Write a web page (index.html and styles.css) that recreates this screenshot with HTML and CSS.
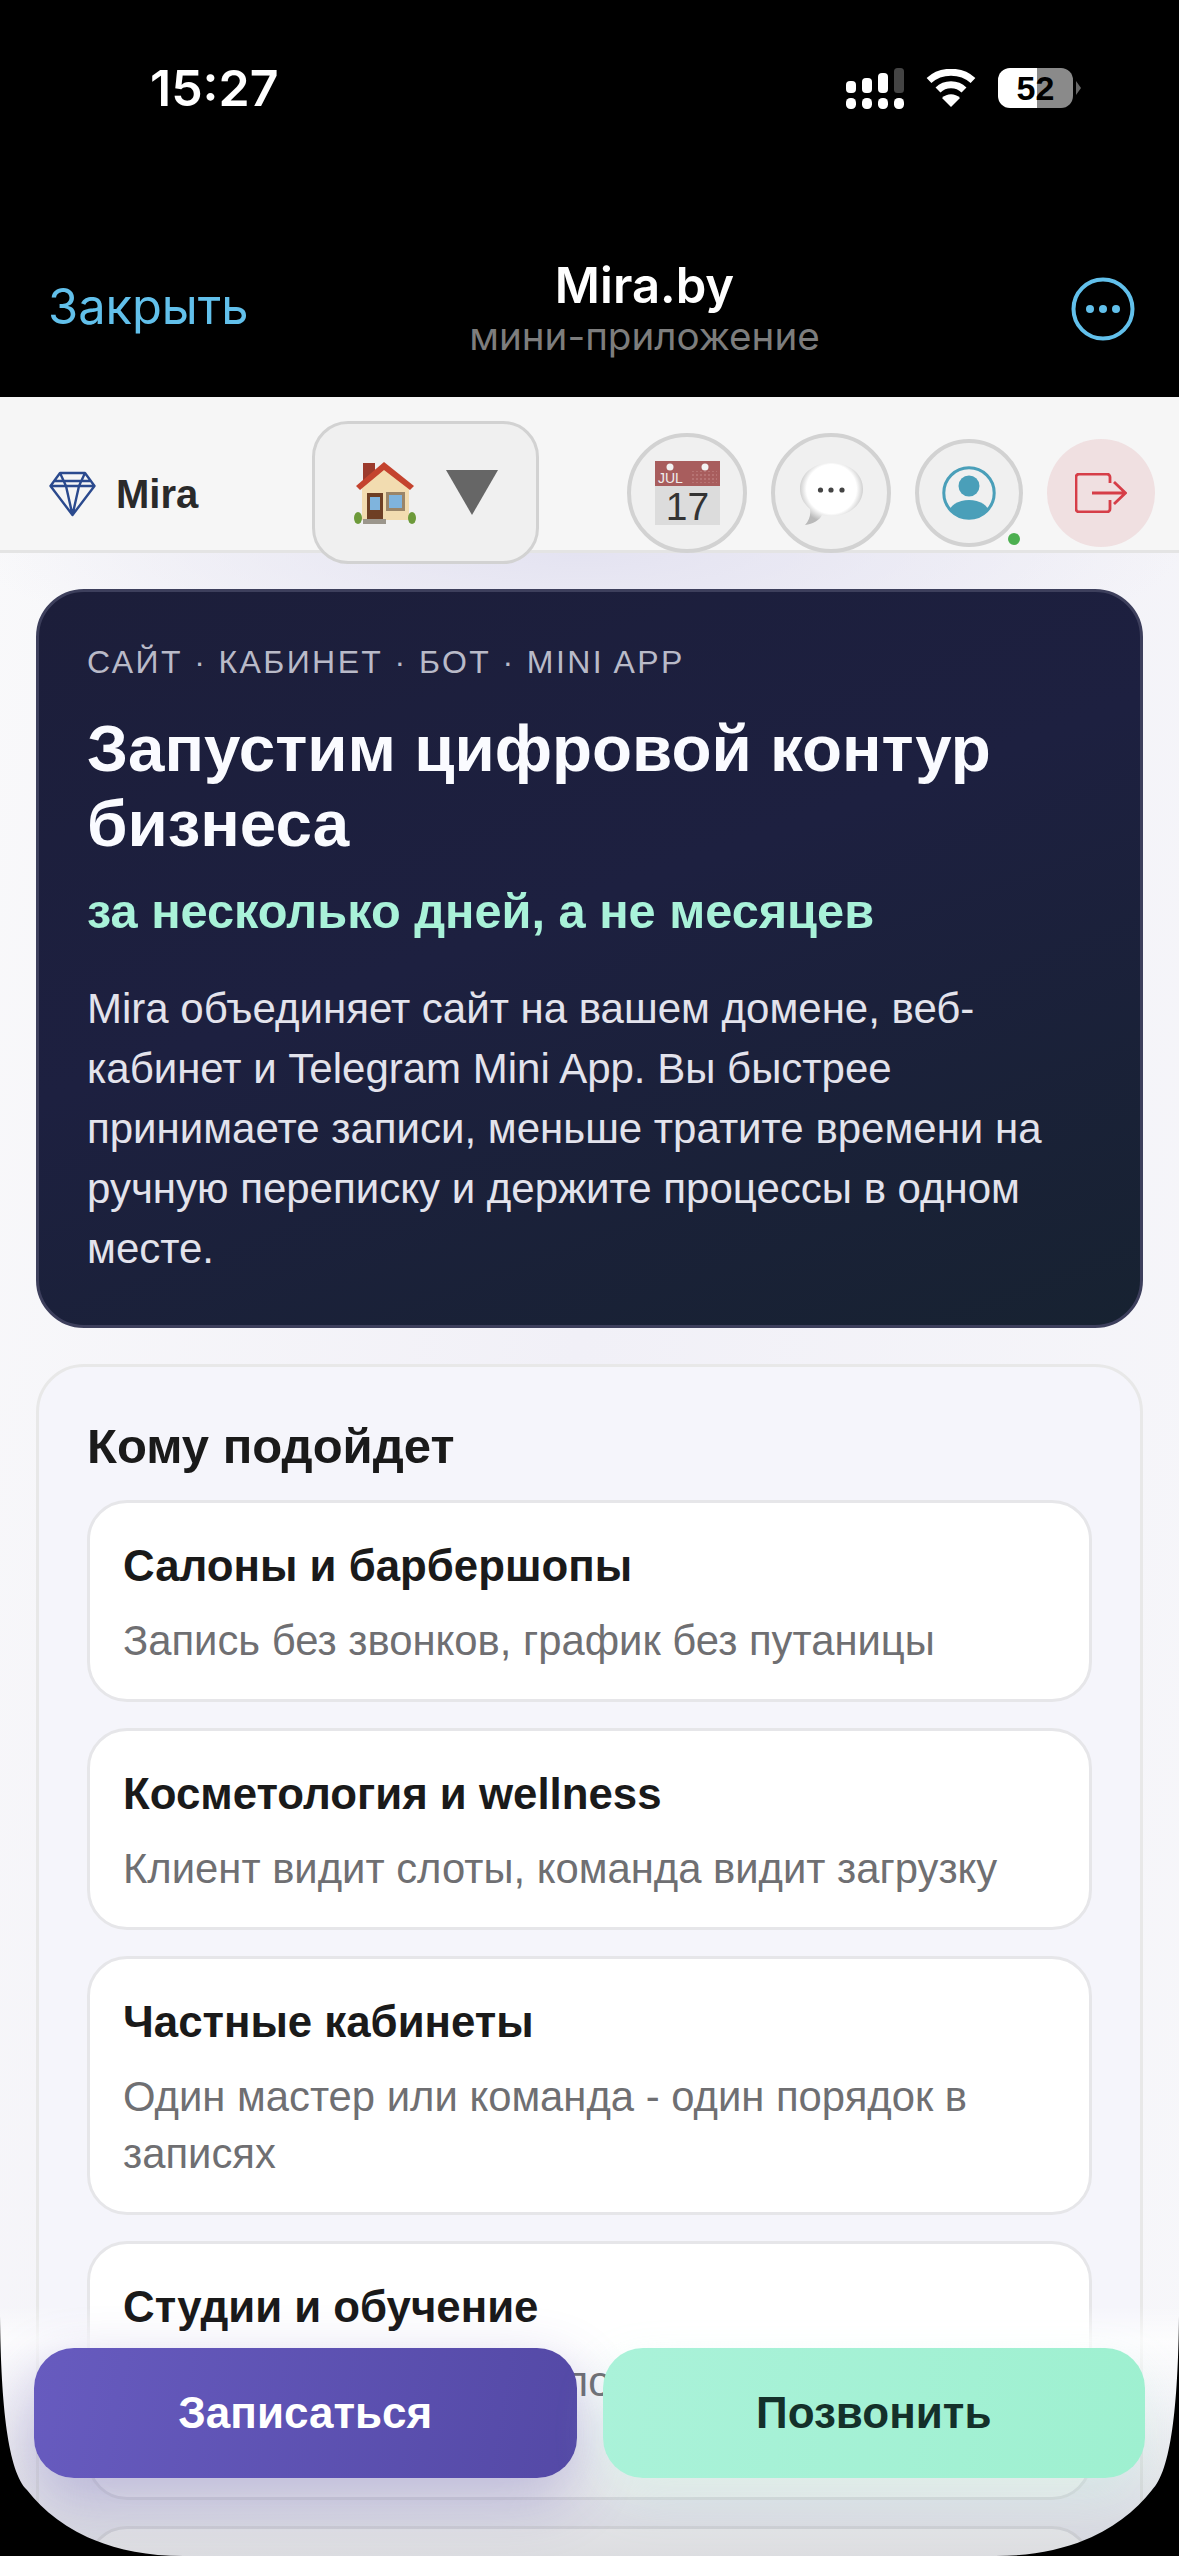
FILE: index.html
```html
<!DOCTYPE html>
<html lang="ru">
<head>
<meta charset="utf-8">
<title>Mira.by</title>
<link rel="stylesheet" href="styles.css">
</head>
<body>
<div class="screen">
  <header class="tg">
    <div class="status">
      <span class="clock">15:27</span>
      <div class="status-icons">
        <svg class="signal" width="58" height="41" viewBox="0 0 58 41">
          <g fill="#fff">
            <rect x="0" y="13" width="10" height="12" rx="4"/>
            <rect x="16" y="10" width="10" height="15" rx="4"/>
            <rect x="32" y="5" width="10" height="20" rx="4"/>
            <rect x="0" y="30" width="10" height="11" rx="4.5"/>
            <rect x="16" y="30" width="10" height="11" rx="4.5"/>
            <rect x="32" y="30" width="10" height="11" rx="4.5"/>
            <rect x="48" y="30" width="10" height="11" rx="4.5"/>
          </g>
          <rect x="48" y="0" width="10" height="25" rx="3.5" fill="#444"/>
        </svg>
        <svg class="wifi" width="50" height="38" viewBox="0 0 50 38">
          <path d="M3 11.5C15 0.5 35 0.5 47 11.5" fill="none" stroke="#fff" stroke-width="7"/>
          <path d="M12 21C19 14 31 14 38 21" fill="none" stroke="#fff" stroke-width="7"/>
          <path d="M25 38L16 29C21 24 29 24 34 29Z" fill="#fff"/>
        </svg>
        <div class="battery"><div class="battery-body"><span>52</span></div><i class="battery-tip"></i></div>
      </div>
    </div>
    <div class="tg-nav">
      <span class="close">Закрыть</span>
      <div class="tg-title"><strong>Mira.by</strong><span>мини-приложение</span></div>
      <svg class="more" width="64" height="64" viewBox="0 0 64 64">
        <circle cx="32" cy="32" r="29.5" fill="none" stroke="#62c0eb" stroke-width="4"/>
        <circle cx="19" cy="32" r="4" fill="#62c0eb"/><circle cx="32" cy="32" r="4" fill="#62c0eb"/><circle cx="45" cy="32" r="4" fill="#62c0eb"/>
      </svg>
    </div>
  </header>

  <nav class="topbar">
    <div class="brand">
      <svg width="47" height="46" viewBox="0 0 47 46">
        <path d="M11 2H36L45.5 15L23.5 44L1.5 15Z M1.5 15H45.5 M6 10H41 M11 2L17 15L23.5 44L30 15L36 2" fill="none" stroke="#2b4a8e" stroke-width="2.4" stroke-linejoin="round"/>
      </svg>
      <span>Mira</span>
    </div>
    <div class="picker">
      <svg class="house" width="62" height="62" viewBox="0 0 62 62">
        <rect x="9" y="1" width="12" height="22" fill="#9c3a2c"/>
        <path d="M8 25L30 6L55 25V58H8Z" fill="#f2dcb0"/>
        <path d="M2 24L30 0L60 24L56 28L30 8L6 28Z" fill="#c4432e"/>
        <rect x="13" y="31" width="16" height="27" fill="#6e3f24"/>
        <rect x="16" y="35" width="10" height="13" fill="#7fb4dd"/>
        <rect x="32" y="30" width="19" height="19" fill="#9a8568"/>
        <rect x="35" y="33" width="13" height="13" fill="#7fb4dd"/>
        <rect x="9" y="57" width="23" height="5" fill="#9b968c"/>
        <ellipse cx="4" cy="56" rx="4" ry="6" fill="#6d9a3a"/><ellipse cx="58" cy="56" rx="4" ry="6" fill="#6d9a3a"/>
      </svg>
      <svg class="caret" width="52" height="45" viewBox="0 0 52 45"><path d="M0 0H52L26 45Z" fill="#666"/></svg>
    </div>
    <div class="actions">
      <div class="round">
        <svg class="cal" width="65" height="64" viewBox="0 0 65 64">
          <defs><pattern id="dots" width="4" height="4" patternUnits="userSpaceOnUse"><circle cx="2" cy="2" r="0.8" fill="#c98f8f"/></pattern></defs>
          <rect x="0" y="0" width="65" height="25" fill="#a85d5d"/>
          <rect x="35" y="10" width="27" height="12" fill="url(#dots)"/>
          <rect x="0" y="25" width="65" height="39" fill="#dcdcdc"/>
          <circle cx="15" cy="6" r="3.5" fill="#f3f3f3"/><circle cx="50" cy="6" r="3.5" fill="#f3f3f3"/>
          <text x="3" y="22" class="cal-month">JUL</text>
          <text x="32.5" y="59" class="cal-day" text-anchor="middle">17</text>
        </svg>
      </div>
      <div class="round">
        <svg width="63" height="63" viewBox="0 0 63 63">
          <defs><radialGradient id="bub" cx="50%" cy="42%" r="55%"><stop offset="72%" stop-color="#fff"/><stop offset="100%" stop-color="#b9b9b9"/></radialGradient></defs>
          <path d="M10 47C3 41 0 34 0 27C0 11 14 1 31 1C49 1 63 11 63 27C63 43 49 54 31 54C28 54 25 53.5 22 53C20 58 13 62 5 63C9 59 11 53 10 47Z" fill="url(#bub)"/>
          <circle cx="20.5" cy="28" r="2.6" fill="#444"/><circle cx="31" cy="28" r="2.6" fill="#444"/><circle cx="42" cy="28" r="2.6" fill="#444"/>
        </svg>
      </div>
      <div class="round small">
        <svg width="54" height="54" viewBox="0 0 54 54">
          <defs><clipPath id="inner"><circle cx="27" cy="27" r="24.5"/></clipPath></defs>
          <circle cx="27" cy="27" r="25.2" fill="none" stroke="#4a9fb9" stroke-width="3"/>
          <circle cx="27" cy="20" r="10.5" fill="#4a9fb9"/>
          <g clip-path="url(#inner)"><ellipse cx="27" cy="47" rx="20" ry="13" fill="#4a9fb9"/></g>
        </svg>
        <i class="online"></i>
      </div>
      <div class="round small logout">
        <svg width="52" height="40" viewBox="0 0 52 40">
          <path d="M35 10V4a3 3 0 0 0-3-3H4a3 3 0 0 0-3 3v32a3 3 0 0 0 3 3h28a3 3 0 0 0 3-3v-9" fill="none" stroke="#d63e48" stroke-width="2.8"/>
          <path d="M17 20H50M39 9L50.5 20L39 31" fill="none" stroke="#d63e48" stroke-width="2.8"/>
        </svg>
      </div>
    </div>
  </nav>

  <main class="content">
    <section class="hero">
      <div class="kicker">САЙТ · КАБИНЕТ · БОТ · MINI APP</div>
      <h1>Запустим цифровой контур бизнеса</h1>
      <h2>за несколько дней, а не месяцев</h2>
      <p>Mira объединяет сайт на вашем домене, веб-кабинет и Telegram Mini App. Вы быстрее принимаете записи, меньше тратите времени на ручную переписку и держите процессы в одном месте.</p>
    </section>
    <section class="panel">
      <h3>Кому подойдет</h3>
      <div class="list">
        <article class="item"><h4>Салоны и барбершопы</h4><p>Запись без звонков, график без путаницы</p></article>
        <article class="item"><h4>Косметология и wellness</h4><p>Клиент видит слоты, команда видит загрузку</p></article>
        <article class="item"><h4>Частные кабинеты</h4><p>Один мастер или команда - один порядок в записях</p></article>
        <article class="item"><h4>Студии и обучение</h4><p>Расписание занятий и потоков, запись в группы онлайн</p></article>
        <article class="item empty"></article>
      </div>
    </section>
  </main>

  <div class="fade"></div>
  <div class="cta">
    <button class="btn primary">Записаться</button>
    <button class="btn mint">Позвонить</button>
  </div>
  <svg class="corners" width="1179" height="300" viewBox="0 0 1179 300">
    <path d="M0 60C1 150 8 215 27 234C55 270 105 300 183 300H0Z" fill="#000"/>
    <path d="M1179 60C1178 150 1171 215 1152 234C1124 270 1074 300 996 300H1179Z" fill="#000"/>
  </svg>
</div>
</body>
</html>
```
FILE: styles.css
```css
* { box-sizing: border-box; }
html, body { margin: 0; padding: 0; }
body { width: 1179px; height: 2556px; overflow: hidden; background: #000; font-family: "Liberation Sans", Arial, sans-serif; }
.screen { position: relative; width: 1179px; height: 2556px; overflow: hidden; background: linear-gradient(100deg, #fafafb 0%, #f1f0f7 50%, #f7f7fa 100%); display: flex; flex-direction: column; }

.tg { background: #000; height: 397px; flex: none; color: #fff; font-family: Inter, "Liberation Sans", sans-serif; }
.status { display: flex; justify-content: space-between; align-items: center; height: 60px; margin-top: 58px; padding: 0 98px 0 150px; }
.clock { font-size: 50px; font-weight: 600; letter-spacing: 0; }
.status-icons { display: flex; align-items: center; gap: 22px; }
.battery { display: flex; align-items: center; gap: 3px; }
.battery-body { width: 75px; height: 40px; border-radius: 12px; background: linear-gradient(90deg, #fff 0 52%, #8a8a8a 52% 100%); color: #000; display: flex; align-items: center; justify-content: center; font: 700 34px "Liberation Sans", sans-serif; }
.battery-tip { width: 0; height: 0; border-left: 5px solid #666; border-top: 7px solid transparent; border-bottom: 7px solid transparent; }
.tg-nav { display: flex; align-items: center; justify-content: space-between; padding: 0 44px 0 48px; margin-top: 133px; height: 110px; position: relative; }
.close { font-size: 48.8px; color: #62c0eb; font-weight: 400; }
.more { margin-top: 6px; }
.tg-title { position: absolute; left: 110px; right: 0; top: 7px; display: flex; flex-direction: column; align-items: center; text-align: center; }
.tg-title strong { font-size: 49px; font-weight: 600; line-height: 56px; }
.tg-title span { font-size: 38.6px; color: #7d7d7d; line-height: 44px; }

.topbar { position: relative; flex: none; height: 156px; background: #f6f6f6; border-bottom: 3px solid #e4e4e4; display: flex; align-items: flex-start; }
.brand { display: flex; align-items: center; gap: 20px; margin: 74px 0 0 49px; width: 263px; flex: none; }
.brand span { font-size: 40px; font-weight: 700; color: #2a2a2a; }
.picker { flex: none; width: 227px; height: 143px; margin-top: 24px; border: 3px solid #d2d2d2; border-radius: 36px; background: #f0f0f0; display: flex; align-items: center; justify-content: center; gap: 30px; position: relative; z-index: 2; }
.actions { display: flex; align-items: center; gap: 24px; margin-left: 88px; margin-top: 36px; position: relative; z-index: 2; }
.round { width: 120px; height: 120px; border-radius: 50%; border: 4px solid #d2d2d2; background: #f0f0f0; display: flex; align-items: center; justify-content: center; flex: none; position: relative; }
.small { width: 108px; height: 108px; }
.logout { border: 0; background: #f0e0e1; }
.online { position: absolute; right: -1px; bottom: -2px; width: 12px; height: 12px; border-radius: 50%; background: #4caf50; box-shadow: 0 0 0 3px #f6f6f6; }
.cal { overflow: visible; }
.cal-month { font: 400 14px "Liberation Sans", sans-serif; fill: #eee; }
.cal-day { font: 400 39px "Liberation Sans", sans-serif; fill: #333; }

.content { flex: 1; padding: 36px 36px 0; display: flex; flex-direction: column; gap: 36px; background: radial-gradient(ellipse 600px 120px at 580px 0, #e4e3f1 0%, rgba(228,227,241,0) 100%); }
.hero { height: 739px; flex: none; border-radius: 48px; border: 3px solid #3d3f5c; background: linear-gradient(160deg, #1c1e3a 0%, #1d2040 45%, #172231 100%); padding: 50px 48px 0; color: #fff; }
.kicker { font-size: 32px; letter-spacing: 2.4px; color: #b9bac8; line-height: 40px; }
.hero h1 { margin: 29px 0 0; font-size: 65.5px; line-height: 75px; font-weight: 700; color: #fafbff; }
.hero h2 { margin: 22px 0 0; font-size: 48.7px; line-height: 56px; font-weight: 700; color: #a9f2d9; }
.hero p { margin: 40px 0 0; font-size: 42px; line-height: 60px; color: #e3e3ec; }
.panel { flex: none; border: 3px solid #e8e8e8; border-radius: 48px; background: #f5f5fb; padding: 49px 48px 0; }
.panel h3 { margin: 0 0 24px; font-size: 49px; line-height: 60px; font-weight: 700; color: #1a1a1a; }
.list { display: flex; flex-direction: column; gap: 26px; }
.item { background: #fff; border: 3px solid #e6e6e9; border-radius: 40px; padding: 35px 33px 30px; }
.item h4 { position: relative; z-index: 3; margin: 0 0 18px; font-size: 43.8px; line-height: 56px; font-weight: 700; color: #1a1a1a; }
.item p { position: relative; z-index: 3; margin: 0; font-size: 41.8px; line-height: 57px; color: #6f6f72; }
.empty { height: 202px; }

.fade { position: absolute; z-index: 2; left: 0; right: 0; bottom: 0; height: 250px; background: linear-gradient(180deg, rgba(255,255,255,0) 0%, rgba(255,255,255,.75) 14%, rgba(240,240,245,.35) 36%, rgba(50,55,75,.17) 100%); pointer-events: none; }
.cta { position: absolute; z-index: 4; left: 34px; right: 34px; bottom: 78px; display: flex; gap: 26px; }
.btn { flex: 1; height: 130px; border: 0; border-radius: 40px; font: 700 44px "Liberation Sans", sans-serif; }
.primary { color: #fff; background: linear-gradient(100deg, #675bbf 0%, #5449a6 100%); box-shadow: 0 20px 60px rgba(84,70,170,.32); }
.mint { color: #14302a; background: linear-gradient(100deg, #aaf2d9 0%, #9ef0d0 100%); box-shadow: 0 20px 50px rgba(158,240,208,.2); }
.corners { position: absolute; z-index: 5; left: 0; bottom: 0; pointer-events: none; }
```
